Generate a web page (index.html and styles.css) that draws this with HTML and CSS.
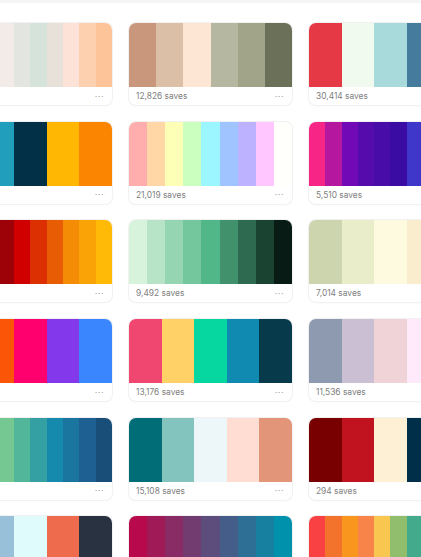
FILE: index.html
```html
<!DOCTYPE html>
<html lang="en">
<head>
    <meta charset="UTF-8">
    <meta name="viewport" content="width=device-width, initial-scale=1.0">
    <title>Trending palettes</title>
    <link rel="stylesheet" href="styles.css">
</head>
<body>
    <div class="top-edge"></div>

    <div class="palette-grid">
        <!-- row 1 -->
        <div class="card">
            <div class="swatch">
                <span style="background:#fdf6f3"></span><span style="background:#fbefea"></span><span style="background:#f7ece8"></span><span style="background:#f3ebe8"></span><span style="background:#e3e6e0"></span><span style="background:#d6e3db"></span><span style="background:#e8e1d9"></span><span style="background:#fde3d7"></span><span style="background:#fdd1b0"></span><span style="background:#fdc49a"></span>
            </div>
            <div class="card-footer"><span class="saves">824 saves</span><span class="more">···</span></div>
        </div>
        <div class="card">
            <div class="swatch">
                <span style="background:#c9977b"></span><span style="background:#dcbfa7"></span><span style="background:#fde6d3"></span><span style="background:#b5b7a0"></span><span style="background:#a1a489"></span><span style="background:#6a7158"></span>
            </div>
            <div class="card-footer"><span class="saves">12,826 saves</span><span class="more">···</span></div>
        </div>
        <div class="card">
            <div class="swatch">
                <span style="background:#e63946"></span><span style="background:#f1faee"></span><span style="background:#a8dadc"></span><span style="background:#457b9d"></span><span style="background:#1d3557"></span>
            </div>
            <div class="card-footer"><span class="saves">30,414 saves</span><span class="more">···</span></div>
        </div>

        <!-- row 2 -->
        <div class="card">
            <div class="swatch">
                <span style="background:#8ecae6"></span><span style="background:#219ebc"></span><span style="background:#023047"></span><span style="background:#ffb703"></span><span style="background:#fb8500"></span>
            </div>
            <div class="card-footer"><span class="saves">693 saves</span><span class="more">···</span></div>
        </div>
        <div class="card">
            <div class="swatch">
                <span style="background:#ffadad"></span><span style="background:#ffd6a5"></span><span style="background:#fdffb6"></span><span style="background:#caffbf"></span><span style="background:#9bf6ff"></span><span style="background:#a0c4ff"></span><span style="background:#bdb2ff"></span><span style="background:#ffc6ff"></span><span style="background:#fffffc"></span>
            </div>
            <div class="card-footer"><span class="saves">21,019 saves</span><span class="more">···</span></div>
        </div>
        <div class="card">
            <div class="swatch">
                <span style="background:#f72585"></span><span style="background:#b5179e"></span><span style="background:#7209b7"></span><span style="background:#560bad"></span><span style="background:#480ca8"></span><span style="background:#3a0ca3"></span><span style="background:#3f37c9"></span><span style="background:#4361ee"></span><span style="background:#4895ef"></span><span style="background:#4cc9f0"></span>
            </div>
            <div class="card-footer"><span class="saves">5,510 saves</span><span class="more">···</span></div>
        </div>

        <!-- row 3 -->
        <div class="card">
            <div class="swatch">
                <span style="background:#03071e"></span><span style="background:#370617"></span><span style="background:#6a040f"></span><span style="background:#9d0208"></span><span style="background:#d00000"></span><span style="background:#dc2f02"></span><span style="background:#e85d04"></span><span style="background:#f48c06"></span><span style="background:#faa307"></span><span style="background:#ffba08"></span>
            </div>
            <div class="card-footer"><span class="saves">337 saves</span><span class="more">···</span></div>
        </div>
        <div class="card">
            <div class="swatch">
                <span style="background:#d8f3dc"></span><span style="background:#b7e4c7"></span><span style="background:#95d5b2"></span><span style="background:#74c69d"></span><span style="background:#52b788"></span><span style="background:#40916c"></span><span style="background:#2d6a4f"></span><span style="background:#1b4332"></span><span style="background:#081c15"></span>
            </div>
            <div class="card-footer"><span class="saves">9,492 saves</span><span class="more">···</span></div>
        </div>
        <div class="card">
            <div class="swatch">
                <span style="background:#ccd5ae"></span><span style="background:#e9edc9"></span><span style="background:#fefae0"></span><span style="background:#faedcd"></span><span style="background:#d4a373"></span>
            </div>
            <div class="card-footer"><span class="saves">7,014 saves</span><span class="more">···</span></div>
        </div>

        <!-- row 4 -->
        <div class="card">
            <div class="swatch">
                <span style="background:#ffbe0b"></span><span style="background:#fb5607"></span><span style="background:#ff006e"></span><span style="background:#8338ec"></span><span style="background:#3a86ff"></span>
            </div>
            <div class="card-footer"><span class="saves">865 saves</span><span class="more">···</span></div>
        </div>
        <div class="card">
            <div class="swatch">
                <span style="background:#ef476f"></span><span style="background:#ffd166"></span><span style="background:#06d6a0"></span><span style="background:#118ab2"></span><span style="background:#073b4c"></span>
            </div>
            <div class="card-footer"><span class="saves">13,176 saves</span><span class="more">···</span></div>
        </div>
        <div class="card">
            <div class="swatch">
                <span style="background:#8e9aaf"></span><span style="background:#cbc0d3"></span><span style="background:#efd3d7"></span><span style="background:#feeafa"></span><span style="background:#dee2ff"></span>
            </div>
            <div class="card-footer"><span class="saves">11,536 saves</span><span class="more">···</span></div>
        </div>

        <!-- row 5 -->
        <div class="card">
            <div class="swatch">
                <span style="background:#d9ed92"></span><span style="background:#b5e48c"></span><span style="background:#99d98c"></span><span style="background:#76c893"></span><span style="background:#52b69a"></span><span style="background:#34a0a4"></span><span style="background:#168aad"></span><span style="background:#1a759f"></span><span style="background:#1e6091"></span><span style="background:#184e77"></span>
            </div>
            <div class="card-footer"><span class="saves">687 saves</span><span class="more">···</span></div>
        </div>
        <div class="card">
            <div class="swatch">
                <span style="background:#006d77"></span><span style="background:#83c5be"></span><span style="background:#edf6f9"></span><span style="background:#ffddd2"></span><span style="background:#e29578"></span>
            </div>
            <div class="card-footer"><span class="saves">15,108 saves</span><span class="more">···</span></div>
        </div>
        <div class="card">
            <div class="swatch">
                <span style="background:#780000"></span><span style="background:#c1121f"></span><span style="background:#fdf0d5"></span><span style="background:#003049"></span><span style="background:#669bbc"></span>
            </div>
            <div class="card-footer"><span class="saves">294 saves</span><span class="more">···</span></div>
        </div>

        <!-- row 6 -->
        <div class="card">
            <div class="swatch">
                <span style="background:#3d5a80"></span><span style="background:#98c1d9"></span><span style="background:#e0fbfc"></span><span style="background:#ee6c4d"></span><span style="background:#293241"></span>
            </div>
            <div class="card-footer"><span class="saves">402 saves</span><span class="more">···</span></div>
        </div>
        <div class="card">
            <div class="swatch">
                <span style="background:#b7094c"></span><span style="background:#a01a58"></span><span style="background:#892b64"></span><span style="background:#723c70"></span><span style="background:#5c4d7d"></span><span style="background:#455e89"></span><span style="background:#2e6f95"></span><span style="background:#1780a1"></span><span style="background:#0091ad"></span>
            </div>
            <div class="card-footer"><span class="saves">4,228 saves</span><span class="more">···</span></div>
        </div>
        <div class="card">
            <div class="swatch">
                <span style="background:#f94144"></span><span style="background:#f3722c"></span><span style="background:#f8961e"></span><span style="background:#f9844a"></span><span style="background:#f9c74f"></span><span style="background:#90be6d"></span><span style="background:#43aa8b"></span><span style="background:#4d908e"></span><span style="background:#577590"></span><span style="background:#277da1"></span>
            </div>
            <div class="card-footer"><span class="saves">22,765 saves</span><span class="more">···</span></div>
        </div>
    </div>
</body>
</html>
```

FILE: styles.css
```css
* {
    box-sizing: border-box;
    margin: 0;
    padding: 0;
}

html, body {
    height: 100%;
    overflow: hidden;
}

body {
    font-family: 'Inter', 'Noto Sans', sans-serif;
    background-color: #ffffff;
    color: #7a7a7a;
}

.top-edge {
    height: 3px;
    background-color: #f5f5f5;
}

.palette-grid {
    display: grid;
    grid-template-columns: repeat(3, 163px);
    grid-auto-rows: 82px;
    column-gap: 17px;
    row-gap: 16.7px;
    margin-left: -51px;
    padding-top: 20px;
    width: 523px;
}

.card {
    display: flex;
    flex-direction: column;
    border-radius: 7px;
    background-color: white;
    box-shadow: 0 0 0 1px #f1f1f1, 0 1px 3px rgba(0,0,0,0.04);
}

.swatch {
    display: flex;
    height: 64px;
    border-radius: 7px 7px 0 0;
    overflow: hidden;
}

.swatch span {
    flex: 1;
}

.card-footer {
    flex: 1;
    display: flex;
    align-items: center;
    justify-content: space-between;
    padding: 0 8px 0 7px;
}

.saves {
    font-size: 8.4px;
    color: #808080;
}

.more {
    font-size: 9px;
    letter-spacing: 0.5px;
    color: #a0a0a0;
}
```
